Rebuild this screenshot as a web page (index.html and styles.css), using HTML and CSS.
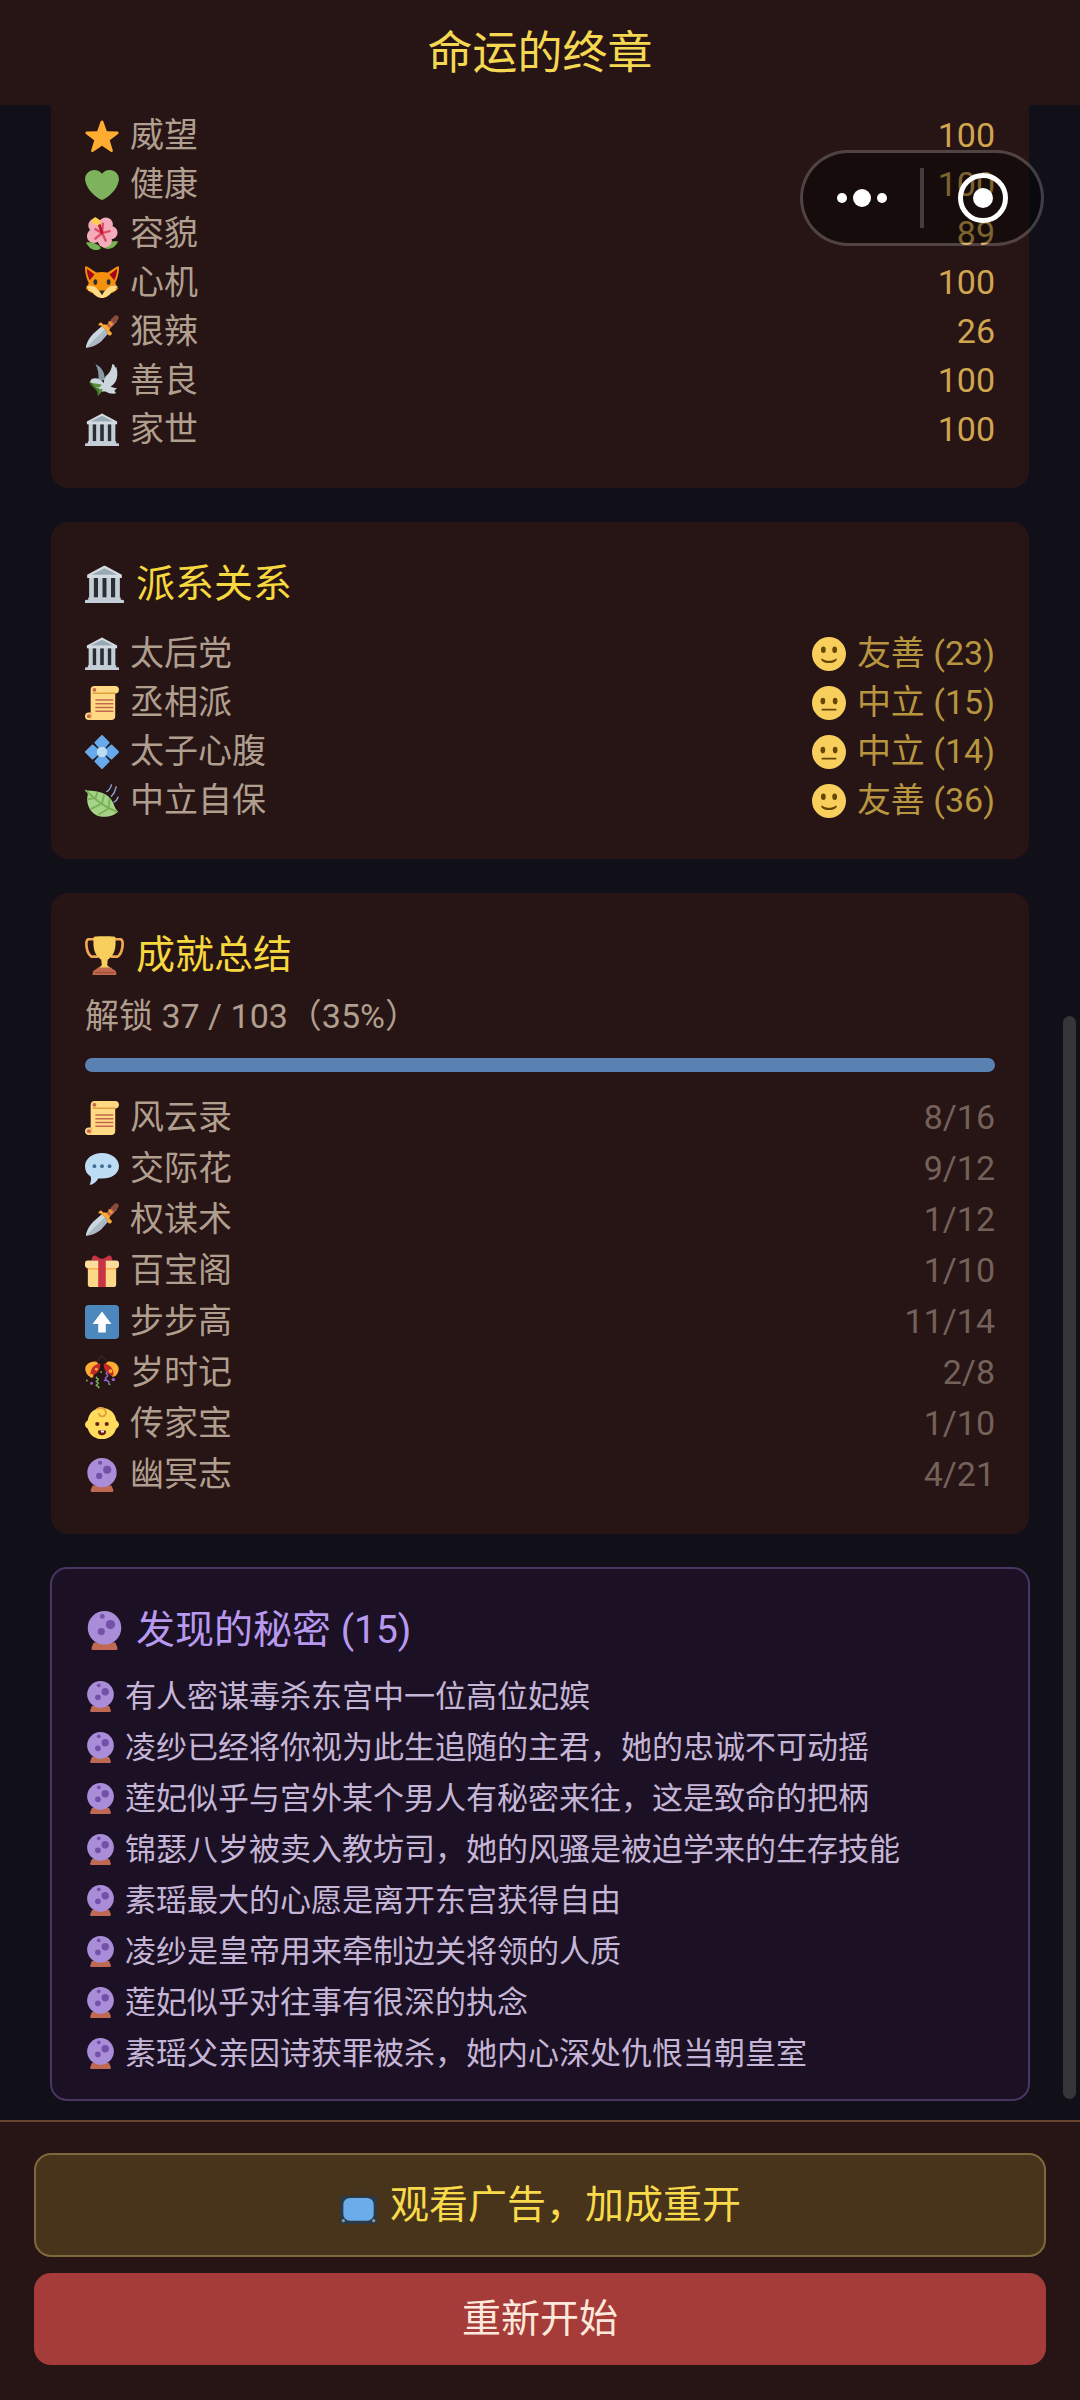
FILE: index.html
```html
<!DOCTYPE html>
<html lang="zh-CN">
<head>
    <meta charset="UTF-8">
    <meta name="viewport" content="width=device-width, initial-scale=1.0">
    <title>命运的终章</title>
    <link rel="stylesheet" href="styles.css">
</head>
<body>
    <!-- Icon set -->
    <svg class="sprite" aria-hidden="true">
        <symbol id="star" viewBox="0 0 36 36">
            <path fill="#FFAC33" d="M18 1.500c.7 0 1.200.4 1.400 1l3.700 10.600 11 .2c1.400 0 2 1.600.9 2.500l-8.800 6.700 3.200 10.700c.4 1.300-1 2.300-2.100 1.500L18 28.300l-9.300 6.400c-1.100.8-2.500-.2-2.100-1.500l3.200-10.700L1 15.800c-1.100-.9-.5-2.500.9-2.500l11-.2 3.700-10.600c.2-.6.7-1 1.400-1z"/>
        </symbol>
        <symbol id="heart" viewBox="0 0 36 36">
            <path fill="#7DB35C" d="M35.900 11.800C35.900 6.300 31.500 2 26.100 2 22.800 2 19.800 3.600 18 6.200 16.200 3.600 13.200 2 9.900 2 4.500 2 .1 6.300.1 11.800c0 .8.1 1.500.3 2.200C1.800 22.500 11.400 31.600 18 34c6.600-2.400 16.200-11.500 17.600-20 .2-.7.300-1.400.3-2.200z"/>
        </symbol>
        <symbol id="flower" viewBox="0 0 36 36">
            <path fill="#77B255" d="M1 27c5-1 13 1 16 6-5 4-12 2-16-6zM35 26c-5-1-13 1-16 6 6 4 13 1 16-6z"/>
            <g fill="#F4ABBA">
                <circle cx="11" cy="9" r="7.500"/><circle cx="22" cy="8" r="7.500"/><circle cx="27.500" cy="16.500" r="7"/>
                <circle cx="21" cy="25" r="7.500"/><circle cx="9.500" cy="20" r="7.500"/><circle cx="18" cy="16" r="8"/>
            </g>
            <path stroke="#DD4A68" stroke-width="2.500" stroke-linecap="round" d="M18 17l-7-4M18 17l1-10M18 17l8-2M18 17l4 8M18 17l-7 6"/>
            <path stroke="#BE1931" stroke-width="3" stroke-linecap="round" d="M18 17l-3-9"/>
            <path fill="#FFCC4D" d="M7 3l4-3 4 3 2 4-4 2-5-2z"/>
        </symbol>
        <symbol id="fox" viewBox="0 0 36 36">
            <path fill="#F4900C" d="M0 2c0-2 1-2 3-1l9 6c4-1 8-1 12 0l9-6c2-1 3-1 3 1 0 6-2 12-4 16l3 6-5 4-8 2-4 3-4-3-8-2-5-4 3-6C2 14 0 8 0 2z"/>
            <path fill="#A0041E" d="M2 3l8 6-5 6C3 11 2 7 2 3zM34 3l-8 6 5 6c2-4 3-8 3-12z"/>
            <path fill="#FFD983" d="M1 22c4-2 8-1 11 1l4 5h4l4-5c3-2 7-3 11-1l-3 2 1 2-4 1c-3 4-7 7-11 7s-8-3-11-7l-4-1 1-2z"/>
            <path fill="#292F33" d="M15 26h6l-3 5zM11 14c1.500 0 2 1.500 2 3s-.5 3-2 3-2-1.500-2-3 .5-3 2-3zM25 14c1.500 0 2 1.500 2 3s-.5 3-2 3-2-1.500-2-3 .5-3 2-3z"/>
        </symbol>
        <symbol id="dagger" viewBox="0 0 36 36">
            <path fill="#AAB8C2" d="M1 35c1-7 5-13 10-17l7-6 7 7-6 7c-4 5-11 8-18 9z"/>
            <path fill="#CCD6DD" d="M1 35c1-7 5-13 10-17l7-6 3 3z"/>
            <path fill="#C1694F" d="M22 11l8-8 4 4-8 8z"/>
            <path fill="#FFAC33" d="M15 9c2-2 3-1 4 1l3 0 4 4 0 3c2 1 3 2 2 4-1 1-3 1-4-1v-2l-7-7h-2c-1 0-1-1 0-2z"/>
            <path fill="#8A4B38" d="M27 5l4-4c3-2 6 1 4 4l-4 4z"/>
            <path stroke="#FFAC33" stroke-width="1.500" d="M25 7l4 4"/>
        </symbol>
        <symbol id="dove" viewBox="0 0 36 36">
            <path fill="#8899A6" d="M11 0c6 3 10 8 10 17l-7 1c1-7 0-12-3-18z"/>
            <path fill="#CCD6DD" d="M20 20c0-4 1-7 4-9 3-3 4-6 5-11l2 1 1 3 1-1 1 4c1 7-1 14-7 17l7 2-3 2 2 3c-4 1-8 0-11-2-5 1-10-1-12-7l-5-3 2-3c5-2 9 0 13 4z"/>
            <path fill="#5C913B" d="M7 20l6 1 5 1-3 3h-5zM9 24l5 2 5 1-2 3-3 4-1-5z"/>
            <path stroke="#3E721D" stroke-width="1.500" fill="none" d="M5 19c2 4 5 6 9 8v6"/>
        </symbol>
        <symbol id="temple" viewBox="0 0 36 36">
            <path fill="#AAB8C2" d="M4 11h28v20H4z"/>
            <path fill="#292F33" d="M8 12h4v18H8zM16 12h4v18h-4zM24 12h4v18h-4z"/>
            <path fill="#C3CED6" d="M4 11h4v20H4zM12 11h4v20h-4zM20 11h4v20h-4zM28 11h4v20h-4zM3 30h30v3H3zM0 33c0-1 1-1 2-1h32c1 0 2 0 2 1v2H0z"/>
            <path fill="#D3DCE2" d="M2 9L17 1c1-.5 1-.5 2 0l15 8v3H2z"/>
            <path fill="#9AAAB4" d="M6 9l12-6 12 6z"/>
        </symbol>
        <symbol id="scroll" viewBox="0 0 36 36">
            <path fill="#FFD983" d="M6 4c0-2.500 1.500-4 4-4h22c2.500 0 4 1.500 4 4s-1.500 4-4 4v24c0 2.500-1.500 4-4 4H4c-2.500 0-4-1.500-4-4s1.500-4 4-4h2z"/>
            <path fill="#E39F3D" d="M8 7h24v1.500H8zM6 28h1v4c0 2-1 3-2 4h-1c2-1 2-2 2-4z"/>
            <path fill="#C1694F" d="M11 14h19v1.500H11zM11 18h19v1.500H11zM11 22h19v1.500H11zM11 26h19v1.500H11z"/>
            <circle cx="10" cy="4" r="2" fill="#C1694F"/><circle cx="4" cy="32" r="2" fill="#C1694F"/>
        </symbol>
        <symbol id="diamond" viewBox="0 0 36 36">
            <path fill="#66A9EC" d="M18 1l7 7-5 6h-4l-5-6zM18 35l7-7-5-6h-4l-5 6zM1 18l7-7 6 5v4l-6 5zM35 18l-7-7-6 5v4l6 5z" stroke="#66A9EC" stroke-width="2" stroke-linejoin="round"/>
            <circle cx="18" cy="18" r="5.500" fill="#BDDDF4"/>
        </symbol>
        <symbol id="leaf" viewBox="0 0 36 36">
            <path fill="#A6D388" d="M2 7c13 1 22 2 28 13 1 4 3 7 5 9-5 6-16 7-23 4C3 28 1 18 3 11z"/>
            <path stroke="#77B255" stroke-width="2" stroke-linecap="round" fill="none" d="M1 7c8 7 16 16 32 22M11 15l2-6M18 21l2-9M25 26l1-10M10 15l-6 1M17 21l-10 5M25 26l-10 6"/>
            <path stroke="#8CA5D6" stroke-width="1.500" stroke-linecap="round" fill="none" d="M28 1c-1 4-3 6-5 7M33 3c-1 5-3 8-5 10M35 14c-1 3-2 4-4 5"/>
        </symbol>
        <symbol id="smile" viewBox="0 0 36 36">
            <circle cx="18" cy="18" r="18" fill="#F8CF5D"/>
            <g fill="#664500"><ellipse cx="12" cy="13.500" rx="2.500" ry="3.500"/><ellipse cx="24" cy="13.500" rx="2.500" ry="3.500"/>
            <path d="M11 23c4 3 10 3 14 0 1-.5 1.500.5 1 1.500-3 4-13 4-16 0-.5-1 0-2 1-1.500z"/></g>
        </symbol>
        <symbol id="neutral" viewBox="0 0 36 36">
            <circle cx="18" cy="18" r="18" fill="#F8CF5D"/>
            <g fill="#664500"><ellipse cx="11.500" cy="16" rx="2.500" ry="3.500"/><ellipse cx="24.500" cy="16" rx="2.500" ry="3.500"/><rect x="10" y="24" width="16" height="2" rx="1"/></g>
        </symbol>
        <symbol id="trophy" viewBox="0 0 36 36">
            <path fill="none" stroke="#F2A850" stroke-width="2.500" d="M9 3H3C0 4 1 16 6 19h6M27 3h6c3 1 2 13-3 16h-6"/>
            <path fill="#F8CF5D" d="M8 1c0-1 20-1 20 0 1 11-1 17-7 21l-.5 5 3.500 3H12l3.500-3-.5-5C9 18 7 12 8 1z"/>
            <path fill="#C1694F" d="M12 29h12l2 2c2 0 3 2 3 5H7c0-3 1-5 3-5z"/>
            <path fill="#A0523B" d="M9 33h18v1.500H9z"/>
        </symbol>
        <symbol id="speech" viewBox="0 0 36 36">
            <path fill="#BDDDF4" d="M18 1c10 0 18 6 18 14s-8 13-18 13h-4c-2 4-5 6-9 7 1-3 2-6 1-9-4-3-6-6-6-11C0 7 8 1 18 1z"/>
            <g fill="#3B6E97"><circle cx="10" cy="15" r="2"/><circle cx="18" cy="15" r="2"/><circle cx="26" cy="15" r="2"/></g>
        </symbol>
        <symbol id="gift" viewBox="0 0 36 36">
            <path fill="#FDD888" d="M3 13h30v19c0 2-1 3-3 3H6c-2 0-3-1-3-3z"/>
            <path fill="#C93445" d="M7 7c0-5 3-7 6-4l5 3 5-3c3-3 6-1 6 4z"/>
            <rect y="7" width="36" height="8" rx="3" fill="#FCDD9B"/>
            <path fill="#FCAB40" d="M3 15h30v1.500H3z"/>
            <path fill="#C93445" d="M14 5h8v30h-8z"/>
        </symbol>
        <symbol id="up" viewBox="0 0 36 36">
            <rect width="36" height="36" rx="4" fill="#4C87BE"/>
            <path fill="#fff" d="M18 7l10 13h-6v9h-8v-9H8z"/>
        </symbol>
        <symbol id="confetti" viewBox="0 0 36 36">
            <path stroke="#45312f" fill="none" d="M10 9l8-9 8 9"/>
            <path fill="#FFAC33" d="M1 17C-2 10 5 5 12 6l4 4-9 12c-3 0-5-2-6-5zM35 17c3-7-4-12-11-11l-4 4 9 12c3 0 5-2 6-5z"/>
            <path fill="#C32A27" d="M16 8c1 6-3 12-10 13-1-7 3-12 10-13zM20 8c-1 6 3 12 10 13 1-7-3-12-10-13z"/>
            <g fill="#FFAC33"><circle cx="12" cy="14" r="1.500"/><circle cx="7" cy="21" r="2"/><circle cx="27" cy="16" r="2"/></g>
            <path stroke="#77B255" stroke-width="1.500" fill="none" d="M13 22c-4 2 4 2 0 4s4 2 0 4 4 2 1 4"/>
            <path stroke="#9266CC" stroke-width="1.500" fill="none" d="M24 17c-5 2 3 3-1 5s3 3-3 4M22 26c3 0 4 2 3 4"/>
            <g fill="#9266CC"><circle cx="7" cy="29" r="1.500"/><circle cx="30" cy="25" r="1.800"/></g>
            <g fill="#77B255"><circle cx="2" cy="26" r="1"/><circle cx="26" cy="30" r="1"/><circle cx="17" cy="17" r="1"/></g>
        </symbol>
        <symbol id="baby" viewBox="0 0 36 36">
            <path fill="#FFDC5D" d="M18 1c8 0 14 5 15 13 4 3 4 6 0 9-2 7-8 11-15 11S5 30 3 23c-4-3-4-6 0-9C4 6 10 1 18 1z"/>
            <path stroke="#E39F3D" stroke-width="2" stroke-linecap="round" fill="none" d="M13 2c5-3 10 1 9 5-1 4-7 4-7 0"/>
            <g fill="#662113"><circle cx="13" cy="18" r="2.200"/><circle cx="23" cy="18" r="2.200"/><path d="M14 25h8c1 3-1 5-4 5s-5-2-4-5z"/></g>
            <path fill="#fff" d="M17 25h3v2h-3z"/>
        </symbol>
        <symbol id="orb" viewBox="0 0 36 36">
            <path fill="#BF6952" d="M8 29h20l2 5c0 1 0 2-1 2H7c-1 0-1-1-1-2z"/>
            <circle cx="18" cy="15.500" r="15.500" fill="#AA8DD8"/>
            <g fill="#7450A8"><circle cx="23.500" cy="12.500" r="4.300"/><circle cx="15" cy="19" r="3.300"/><circle cx="16" cy="5" r="2.200"/></g>
        </symbol>
        <symbol id="tv" viewBox="0 0 36 36">
            <path stroke="#42382a" stroke-width="1.500" fill="none" d="M11 1l7 7 7-7"/>
            <path fill="#2B3A45" d="M4 9h28c2 0 3 1 3 3v20c0 2-1 3-3 3H4c-2 0-3-1-3-3V12c0-2 1-3 3-3z"/>
            <rect x="4" y="11" width="28" height="21" rx="6" fill="#6BACEA"/>
            <circle cx="4" cy="32" r="1.500" fill="#8899A6"/><circle cx="32" cy="32" r="1.500" fill="#8899A6"/>
        </symbol>
    </svg>

    <header class="header">
        <h1>命运的终章</h1>
    </header>

    <!-- Mini program capsule, floats above the page -->
    <div class="capsule">
        <button type="button" class="capsule-btn" aria-label="更多">
            <svg viewBox="0 0 52 20" width="52" height="20" fill="#fff"><circle cx="6" cy="10" r="5"/><circle cx="26" cy="10" r="9"/><circle cx="46" cy="10" r="5"/></svg>
        </button>
        <span class="capsule-line"></span>
        <button type="button" class="capsule-btn" aria-label="关闭">
            <svg viewBox="0 0 50 50" width="50" height="50"><circle cx="25" cy="25" r="22.500" fill="none" stroke="#fff" stroke-width="5"/><circle cx="25" cy="25" r="10" fill="#fff"/></svg>
        </button>
    </div>

    <main class="content">
        <section class="card card-stats">
            <ul class="list">
                <li><svg class="icon"><use href="#star"/></svg>威望<span class="value">100</span></li>
                <li><svg class="icon"><use href="#heart"/></svg>健康<span class="value">100</span></li>
                <li><svg class="icon"><use href="#flower"/></svg>容貌<span class="value">89</span></li>
                <li><svg class="icon"><use href="#fox"/></svg>心机<span class="value">100</span></li>
                <li><svg class="icon"><use href="#dagger"/></svg>狠辣<span class="value">26</span></li>
                <li><svg class="icon"><use href="#dove"/></svg>善良<span class="value">100</span></li>
                <li><svg class="icon"><use href="#temple"/></svg>家世<span class="value">100</span></li>
            </ul>
        </section>

        <section class="card">
            <h2><svg class="icon"><use href="#temple"/></svg>派系关系</h2>
            <ul class="list factions">
                <li><svg class="icon"><use href="#temple"/></svg>太后党<span class="value"><svg class="icon"><use href="#smile"/></svg>友善 (23)</span></li>
                <li><svg class="icon"><use href="#scroll"/></svg>丞相派<span class="value"><svg class="icon"><use href="#neutral"/></svg>中立 (15)</span></li>
                <li><svg class="icon"><use href="#diamond"/></svg>太子心腹<span class="value"><svg class="icon"><use href="#neutral"/></svg>中立 (14)</span></li>
                <li><svg class="icon"><use href="#leaf"/></svg>中立自保<span class="value"><svg class="icon"><use href="#smile"/></svg>友善 (36)</span></li>
            </ul>
        </section>

        <section class="card card-achievements">
            <h2><svg class="icon"><use href="#trophy"/></svg>成就总结</h2>
            <p class="summary">解锁 37 / 103（35%）</p>
            <div class="progress"></div>
            <ul class="list achievements">
                <li><svg class="icon"><use href="#scroll"/></svg>风云录<span class="value">8/16</span></li>
                <li><svg class="icon"><use href="#speech"/></svg>交际花<span class="value">9/12</span></li>
                <li><svg class="icon"><use href="#dagger"/></svg>权谋术<span class="value">1/12</span></li>
                <li><svg class="icon"><use href="#gift"/></svg>百宝阁<span class="value">1/10</span></li>
                <li><svg class="icon"><use href="#up"/></svg>步步高<span class="value">11/14</span></li>
                <li><svg class="icon"><use href="#confetti"/></svg>岁时记<span class="value">2/8</span></li>
                <li><svg class="icon"><use href="#baby"/></svg>传家宝<span class="value">1/10</span></li>
                <li><svg class="icon"><use href="#orb"/></svg>幽冥志<span class="value">4/21</span></li>
            </ul>
        </section>

        <section class="card card-secrets">
            <h2><svg class="icon"><use href="#orb"/></svg>发现的秘密 (15)</h2>
            <ul class="list secrets">
                <li><svg class="icon"><use href="#orb"/></svg>有人密谋毒杀东宫中一位高位妃嫔</li>
                <li><svg class="icon"><use href="#orb"/></svg>凌纱已经将你视为此生追随的主君，她的忠诚不可动摇</li>
                <li><svg class="icon"><use href="#orb"/></svg>莲妃似乎与宫外某个男人有秘密来往，这是致命的把柄</li>
                <li><svg class="icon"><use href="#orb"/></svg>锦瑟八岁被卖入教坊司，她的风骚是被迫学来的生存技能</li>
                <li><svg class="icon"><use href="#orb"/></svg>素瑶最大的心愿是离开东宫获得自由</li>
                <li><svg class="icon"><use href="#orb"/></svg>凌纱是皇帝用来牵制边关将领的人质</li>
                <li><svg class="icon"><use href="#orb"/></svg>莲妃似乎对往事有很深的执念</li>
                <li><svg class="icon"><use href="#orb"/></svg>素瑶父亲因诗获罪被杀，她内心深处仇恨当朝皇室</li>
            </ul>
        </section>

        <div class="scrollbar"></div>
    </main>

    <footer class="footer">
        <button type="button" class="btn btn-ad"><svg class="icon"><use href="#tv"/></svg>观看广告，加成重开</button>
        <button type="button" class="btn btn-restart">重新开始</button>
    </footer>
</body>
</html>
```
FILE: styles.css
```css
* {
    margin: 0;
    padding: 0;
    box-sizing: border-box;
}

body {
    height: 100vh;
    display: flex;
    flex-direction: column;
    background: #110f18;
    color: #b09f8e;
    font-family: Roboto, 'Noto Sans CJK SC', sans-serif;
    font-size: 34px;
    line-height: 49px;
    overflow: hidden;
}

.sprite {
    position: absolute;
    width: 0;
    height: 0;
}

.icon {
    width: 1em;
    height: 1em;
    flex: none;
    margin-right: 11px;
}

.header {
    background: #271415;
    padding: 21px 34px 18px;
    text-align: center;
}

h1 {
    color: #f5d851;
    font-size: 45px;
    font-weight: 400;
    line-height: 66px;
}

/* Capsule */
.capsule {
    position: absolute;
    top: 150px;
    right: 36px;
    z-index: 10;
    width: 244px;
    height: 96px;
    display: flex;
    align-items: center;
    border: 3px solid rgba(255, 255, 255, 0.2);
    border-radius: 48px;
    background: rgba(0, 0, 0, 0.4);
    background-clip: padding-box;
}

.capsule-btn {
    flex: 1;
    display: flex;
    justify-content: center;
    background: none;
    border: none;
    cursor: pointer;
}

.capsule-line {
    width: 4px;
    height: 60px;
    background: rgba(255, 255, 255, 0.2);
}

/* Cards */
.content {
    position: relative;
    flex: 1;
    min-height: 0;
    display: flex;
    flex-direction: column;
    gap: 34px;
    padding: 0 51px;
    overflow: hidden;
}

.card {
    flex: none;
    padding: 34px;
    border-radius: 17px;
    background: #271415;
}

.card-stats {
    padding-top: 6px;
    border-top-left-radius: 0;
    border-top-right-radius: 0;
}

h2 {
    display: flex;
    align-items: center;
    margin-bottom: 16px;
    color: #f7d83e;
    font-size: 39px;
    font-weight: 400;
    line-height: 57px;
}

h2 .icon,
.btn .icon {
    margin-right: 12px;
}

.list {
    list-style: none;
}

.list li {
    display: flex;
    align-items: center;
}

.value {
    display: flex;
    align-items: center;
    margin-left: auto;
    color: #d0a550;
}

.factions .value {
    color: #b7963f;
}

.card-achievements h2 {
    margin-bottom: 8px;
}

.progress {
    height: 14px;
    margin: 17px 0 20px;
    border-radius: 7px;
    background: #5982b2;
}

.achievements,
.secrets {
    line-height: 51px;
}

.achievements .value {
    color: #74615a;
}

.card-secrets {
    margin: -1px -1px 0;
    padding: 33px 33px 20px;
    border: 2px solid #483562;
    background: #1c1124;
}

.card-secrets h2 {
    margin-bottom: 12px;
    color: #b899f0;
}

.secrets {
    color: #c5b5d6;
    font-size: 31px;
}

.secrets .icon {
    margin-right: 9px;
}

.scrollbar {
    position: absolute;
    right: 4px;
    bottom: 21px;
    width: 13px;
    height: 1083px;
    border-radius: 7px;
    background: #37353a;
}

/* Bottom actions */
.footer {
    display: flex;
    flex-direction: column;
    gap: 16px;
    padding: 31px 34px 35px;
    border-top: 2px solid #69452f;
    background: #271415;
}

.btn {
    display: flex;
    align-items: center;
    justify-content: center;
    padding: 18px;
    border: none;
    border-radius: 17px;
    font-family: inherit;
    font-size: 39px;
    line-height: 56px;
    cursor: pointer;
}

.btn-ad {
    padding: 22px 18px;
    border: 2px solid #7f683c;
    background: #48331b;
    color: #f8da4a;
}

.btn-restart {
    background: #a63c39;
    color: #fde9dc;
}
```
